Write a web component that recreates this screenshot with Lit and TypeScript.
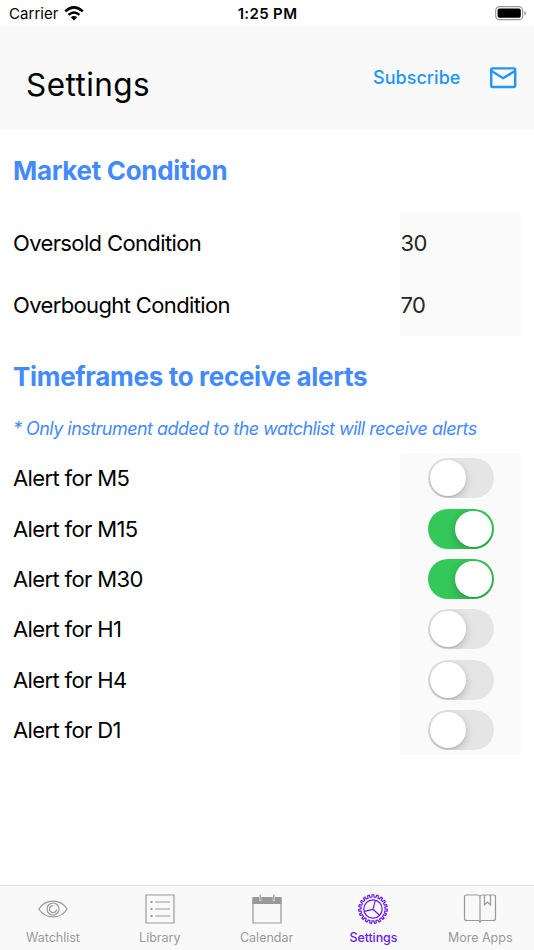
import { LitElement, html, svg, css } from "lit";
import { customElement, property } from "lit/decorators.js";
import { classMap } from "lit/directives/class-map.js";

const gearPath = (() => {
  const teeth = 19;
  const step = (Math.PI * 2) / teeth;
  const pts: string[] = [];
  for (let i = 0; i < teeth; i++) {
    const a = i * step - Math.PI / 2;
    for (const [off, r] of [[-0.27, 12], [-0.19, 14.3], [0.19, 14.3], [0.27, 12]]) {
      pts.push(`${(15 + r * Math.cos(a + off * step)).toFixed(2)} ${(15 + r * Math.sin(a + off * step)).toFixed(2)}`);
    }
  }
  return `M${pts.join("L")}Z`;
})();

const icons: Record<string, unknown> = {
  Watchlist: svg`<path d="M.8 15C7.500 4.400 22.500 4.400 29.200 15C22.500 25.600 7.500 25.600 .8 15Z"/><circle cx="15" cy="15" r="6"/><path d="M15 11.700A3.400 3.400 0 1 0 18.400 15.200"/>`,
  Library: svg`<path d="M1 1H29V29H1ZM10.200 8H25M10.200 15H25M10.200 22H25"/><path class="dots" d="M5.500 7h2v2h-2zM5.500 14h2v2h-2zM5.500 21h2v2h-2z"/>`,
  Calendar: svg`<path class="fill" d="M.5 3H7.300V6.800H9.200V3H20.800V6.800H22.700V3H29.500V10H.5Z"/><path d="M1 4V29H29V4M8.200 .5V6M21.800 .5V6"/>`,
  Settings: svg`<path d="${gearPath}"/><circle cx="15" cy="15" r="9.2"/><path d="M15 15.300L17.300 6.300M15 15.300L6.300 17.300M15 15.300L21.500 21.300"/>`,
  "More Apps": svg`<path d="M15 2.700Q14.500 1 12.500 1H1.500Q-.5 1-.5 3V24.500Q-.5 26.500 1.500 26.500H13Q15 26.500 15 28.800Q15 26.500 17 26.500H28.500Q30.500 26.500 30.500 24.500V3Q30.500 1 28.500 1H17.500Q15.500 1 15 2.700V28.800M19.500 1.500V10.800L22.500 8L25.500 10.800V1.500"/>`,
};

@customElement("ios-switch")
class IosSwitch extends LitElement {
  @property({ type: Boolean, reflect: true }) on = false;
  static styles = css`
    :host { display: flex; width: 66px; height: 40px; border-radius: 20px; background: #e5e5e5; overflow: hidden; box-sizing: border-box; padding: 2px; }
    :host([on]) { background: #34c759; justify-content: flex-end; }
    .knob { width: 36.500px; height: 36px; border-radius: 50%; background: #fff; box-shadow: 0 3px 8px rgba(0,0,0,.2), 0 1px 1px rgba(0,0,0,.1); }
  `;
  render() { return html`<div class="knob"></div>`; }
}

@customElement("app-root")
class AppRoot extends LitElement {
  static styles = css`
    :host { display: flex; flex-direction: column; height: 950px; background: #fff; color: #000; font-family: Inter, "Liberation Sans", sans-serif; white-space: nowrap; overflow: hidden; }
    * { box-sizing: border-box; }
    svg { display: block; fill: none; overflow: visible; }
    .status { height: 26px; display: grid; grid-template-columns: 1fr auto 1fr; align-items: center; padding: 1px 8px 0 9px; font-size: 15px; line-height: 26px; }
    .carrier { display: flex; align-items: center; gap: 6px; letter-spacing: .05px; }
    .carrier svg { margin: -2px 0 0 -1px; }
    .time { font-weight: 600; letter-spacing: .35px; }
    .battery { justify-self: end; margin-top: -1px; }
    header { height: 103px; background: #f9f9f9; display: flex; align-items: center; padding: 0 17px 0 26px; }
    h1 { margin: 15px auto 0 0; font-size: 31.500px; font-weight: 400; letter-spacing: .45px; line-height: 40px; }
    .subscribe { color: #2196f3; font-size: 18px; font-weight: 500; letter-spacing: .05px; margin-right: 29.500px; }
    main { flex: 1; padding: 0 13px; }
    h2 { margin: 0; color: #448aff; font-size: 26px; font-weight: 700; line-height: 42px; letter-spacing: -.32px; }
    .market { padding: 21px 0 20px; }
    .frames { padding-top: 20px; }
    .note { color: #448aff; font-style: italic; font-size: 18px; line-height: 24px; letter-spacing: -.54px; margin: 19px 0 12.200px; }
    .row { display: grid; grid-template-columns: 1fr 121px; font-size: 22px; letter-spacing: -.63px; }
    .row > * { display: flex; align-items: center; }
    .field { height: 62px; }
    .alert { height: 50.300px; }
    .value { background: #fafafa; }
    .field .value { color: #262626; padding-left: .5px; }
    .toggle { justify-content: center; }
    nav { height: 65px; background: #f9f9f9; border-top: 1px solid #dedede; display: grid; grid-template-columns: repeat(5, 1fr); }
    .tab { display: flex; flex-direction: column; align-items: center; padding: 8px .8px 0 0; color: #999; font-size: 12.500px; line-height: 18px; gap: 5px; letter-spacing: 0; }
    .tab svg { stroke: currentColor; stroke-width: 1.200; }
    .fill, .dots { fill: currentColor; stroke: none; }
    .active { color: #6a1bea; font-weight: 500; letter-spacing: -.1px; }
  `;
  render() {
    const alerts: [string, boolean][] = [["M5", false], ["M15", true], ["M30", true], ["H1", false], ["H4", false], ["D1", false]];
    return html`
      <div class="status">
        <div class="carrier"><span>Carrier</span>
          <svg width="20" height="15" viewBox="0 0 20 15" stroke="#000" stroke-width="2.500"><path d="M1.200 5.400Q10-2.600 18.800 5.400M4.500 8.900Q10 4 15.500 8.900"/><path d="M6.800 11.300Q10 8.500 13.200 11.300L10 14.600Z" fill="#000" stroke="none"/></svg>
        </div>
        <div class="time">1:25 PM</div>
        <svg class="battery" width="31" height="15" viewBox="0 0 31 15"><rect x=".7" y=".7" width="27" height="13" rx="3.800" stroke="#999" stroke-width="1.200"/><rect x="2.600" y="2.600" width="23.200" height="9.200" rx="1.800" fill="#000"/><path d="M29.300 5Q31 5.700 31 7.200T29.300 9.500Z" fill="#999"/></svg>
      </div>
      <header>
        <h1>Settings</h1><div class="subscribe">Subscribe</div>
        <svg width="27" height="22" viewBox="0 0 27 22" stroke="#2196f3" stroke-width="2.400"><rect x="1.200" y="1.400" width="24" height="18.600" rx="1.500"/><path d="M1.600 4L13.200 11.200L24.800 4"/></svg>
      </header>
      <main>
        <h2 class="market">Market Condition</h2>
        ${[["Oversold Condition", "30"], ["Overbought Condition", "70"]].map(([n, v]) => html`<div class="row field"><span>${n}</span><span class="value">${v}</span></div>`)}
        <h2 class="frames">Timeframes to receive alerts</h2>
        <p class="note">* Only instrument added to the watchlist will receive alerts</p>
        ${alerts.map(([n, on]) => html`<div class="row alert"><span>Alert for ${n}</span><span class="value toggle"><ios-switch ?on=${on}></ios-switch></span></div>`)}
      </main>
      <nav>${Object.keys(icons).map((n) => html`<div class=${classMap({ tab: true, active: n === "Settings" })}><svg width="30" height="30" viewBox="0 0 30 30">${icons[n]}</svg><span>${n}</span></div>`)}</nav>
    `;
  }
}
